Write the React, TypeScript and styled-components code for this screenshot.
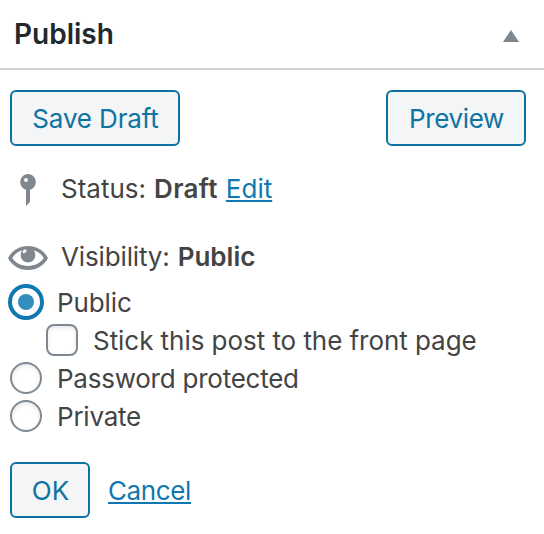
import React, { useState } from 'react';
import styled, { createGlobalStyle, css } from 'styled-components';

const GlobalStyle = createGlobalStyle`
  *, *::before, *::after { box-sizing: border-box; }
  body {
    margin: 0;
    background: #fff;
    color: #444;
    font-family: Inter, "Liberation Sans", sans-serif;
    font-size: 26px;
    line-height: 38px;
  }
`;

const Panel = styled.section`
  display: flex;
  flex-direction: column;
  height: 534px;
  overflow: hidden;
`;

const Header = styled.header`
  display: flex;
  align-items: center;
  justify-content: space-between;
  height: 70px;
  padding: 0 25px 0 14px;
  border-bottom: 2px solid #ccd0d4;
`;

const Title = styled.h2`
  margin: 0;
  color: #23282d;
  font-size: 28px;
  font-weight: 600;
`;

const Toggle = styled.button`
  display: flex;
  margin: 4px 0 0;
  padding: 0;
  border: 0;
  background: none;
`;

const Actions = styled.div`
  display: flex;
  justify-content: space-between;
  padding: 20px 18px 0 10px;
`;

const Button = styled.button<{ $width: number; $tracking?: number }>`
  width: ${(p) => p.$width}px;
  height: 56px;
  padding: 2px 0 0 1px;
  border: 2px solid #0e73a1;
  border-radius: 6px;
  background: #f3f5f6;
  color: #0e73a1;
  font: inherit;
  letter-spacing: ${(p) => p.$tracking ?? 0}px;
  text-align: center;
  white-space: nowrap;
`;

const InfoRow = styled.div<{ $gap: number }>`
  display: flex;
  align-items: center;
  height: 38px;
  margin-top: ${(p) => p.$gap}px;
  padding-left: 8px;

  svg {
    flex: none;
    margin-right: 13px;
  }
`;

const Text = styled.span<{ $tracking?: number }>`
  letter-spacing: ${(p) => p.$tracking ?? 0}px;
  white-space: pre;
`;

const Value = styled.b<{ $tracking?: number }>`
  margin-left: 8px;
  font-weight: 600;
  letter-spacing: ${(p) => p.$tracking ?? 0}px;
`;

const Link = styled.a<{ $gap: number; $tracking?: number }>`
  margin-left: ${(p) => p.$gap}px;
  color: #0f78b0;
  letter-spacing: ${(p) => p.$tracking ?? 0}px;
  text-decoration: underline;
  text-decoration-thickness: 2px;
  text-underline-offset: 2px;
  text-decoration-skip-ink: none;
`;

const Options = styled.div`
  display: flex;
  flex-direction: column;
  margin-top: 7px;
  padding-left: 10px;
`;

const Option = styled.label<{ $nested?: boolean }>`
  display: flex;
  align-items: center;
  gap: 15px;
  height: 38px;
  padding-left: ${(p) => (p.$nested ? 36 : 0)}px;
`;

const OptionText = styled(Text)`
  padding-top: 1px;
`;

const control = css`
  appearance: none;
  flex: none;
  width: 32px;
  height: 32px;
  margin: 0;
  border: 2px solid #7e8993;
  background: #fff;
  box-shadow: inset 0 2px 4px rgba(0, 0, 0, 0.1);
`;

const Checkbox = styled.input.attrs({ type: 'checkbox' })`
  ${control}
  border-radius: 8px;
`;

const Radio = styled.input.attrs({ type: 'radio' })`
  ${control}
  display: grid;
  place-items: center;
  border-radius: 50%;

  &:checked {
    border-color: #0f78b0;
    box-shadow: 0 0 0 2px #0f78b0;
  }

  &:checked::before {
    content: '';
    width: 16px;
    height: 16px;
    border-radius: 50%;
    background: #338dbd;
  }
`;

const Footer = styled.footer`
  display: flex;
  align-items: center;
  margin-top: 27px;
  padding-left: 10px;

  a {
    padding-top: 2px;
  }
`;

const PinIcon = () => (
  <svg width="40" height="38" viewBox="0 0 40 38" fill="#80878f" aria-hidden="true">
    <path
      fillRule="evenodd"
      d="M20 4a8 8 0 0 1 2 15.700V32l-4 4V19.700A8 8 0 0 1 20 4Zm-2 4a2 2 0 1 0 0 4 2 2 0 0 0 0-4Z"
    />
  </svg>
);

const EyeIcon = () => (
  <svg width="40" height="38" viewBox="0 0 40 38" fill="#80878f" aria-hidden="true">
    <path
      fillRule="evenodd"
      d="M0 20C4 12.500 11 8 20 8s16 4.500 20 12c-4 7.500-11 12-20 12S4 27.500 0 20Zm4.200 0C7.600 25 13 27.900 20 27.900S32.400 25 35.800 20c-2.400-3.600-5.700-6.300-10.200-7.700 1.100 1.300 1.700 3 1.700 5a7.300 7.300 0 0 1-14.600 0c0-2 .6-3.700 1.700-5C9.900 13.700 6.600 16.400 4.200 20Z"
    />
    <path d="M16.800 11.600c.9-.2 1.600.2 1.700 1 .1.700-.2 1.200-.8 1.700-.5.400-.8.900-1.300 1-.8.200-1.500-.3-1.600-1.200-.2-1.200.7-2.200 2-2.500Z" fill="#fff" />
  </svg>
);

type Visibility = 'public' | 'password' | 'private';

export default function App() {
  const [visibility, setVisibility] = useState<Visibility>('public');

  const radio = (value: Visibility) => (
    <Radio
      name="visibility"
      checked={visibility === value}
      onChange={() => setVisibility(value)}
    />
  );

  return (
    <>
      <GlobalStyle />
      <Panel>
        <Header>
          <Title>Publish</Title>
          <Toggle aria-label="Toggle panel">
            <svg width="16" height="12" viewBox="0 0 16 12">
              <path d="M8 0l8 12H0z" fill="#7e868e" />
            </svg>
          </Toggle>
        </Header>
        <Actions>
          <Button $width={170} $tracking={-0.15}>Save Draft</Button>
          <Button $width={140} $tracking={-0.35}>Preview</Button>
        </Actions>
        <InfoRow $gap={24}>
          <PinIcon />
          <Text>Status:</Text>
          <Value $tracking={0.35}>Draft</Value>
          <Link $gap={8} href="#status">Edit</Link>
        </InfoRow>
        <InfoRow $gap={30}>
          <EyeIcon />
          <Text $tracking={-0.14}>Visibility:</Text>
          <Value>Public</Value>
        </InfoRow>
        <Options>
          <Option>
            {radio('public')}
            <OptionText $tracking={-0.1}>Public</OptionText>
          </Option>
          <Option $nested>
            <Checkbox />
            <OptionText $tracking={-0.05}>Stick this post to the front page</OptionText>
          </Option>
          <Option>
            {radio('password')}
            <OptionText $tracking={-0.24}>Password protected</OptionText>
          </Option>
          <Option>
            {radio('private')}
            <OptionText $tracking={-0.22}>Private</OptionText>
          </Option>
        </Options>
        <Footer>
          <Button $width={80}>OK</Button>
          <Link $gap={18} $tracking={-0.38} href="#cancel">Cancel</Link>
        </Footer>
      </Panel>
    </>
  );
}
